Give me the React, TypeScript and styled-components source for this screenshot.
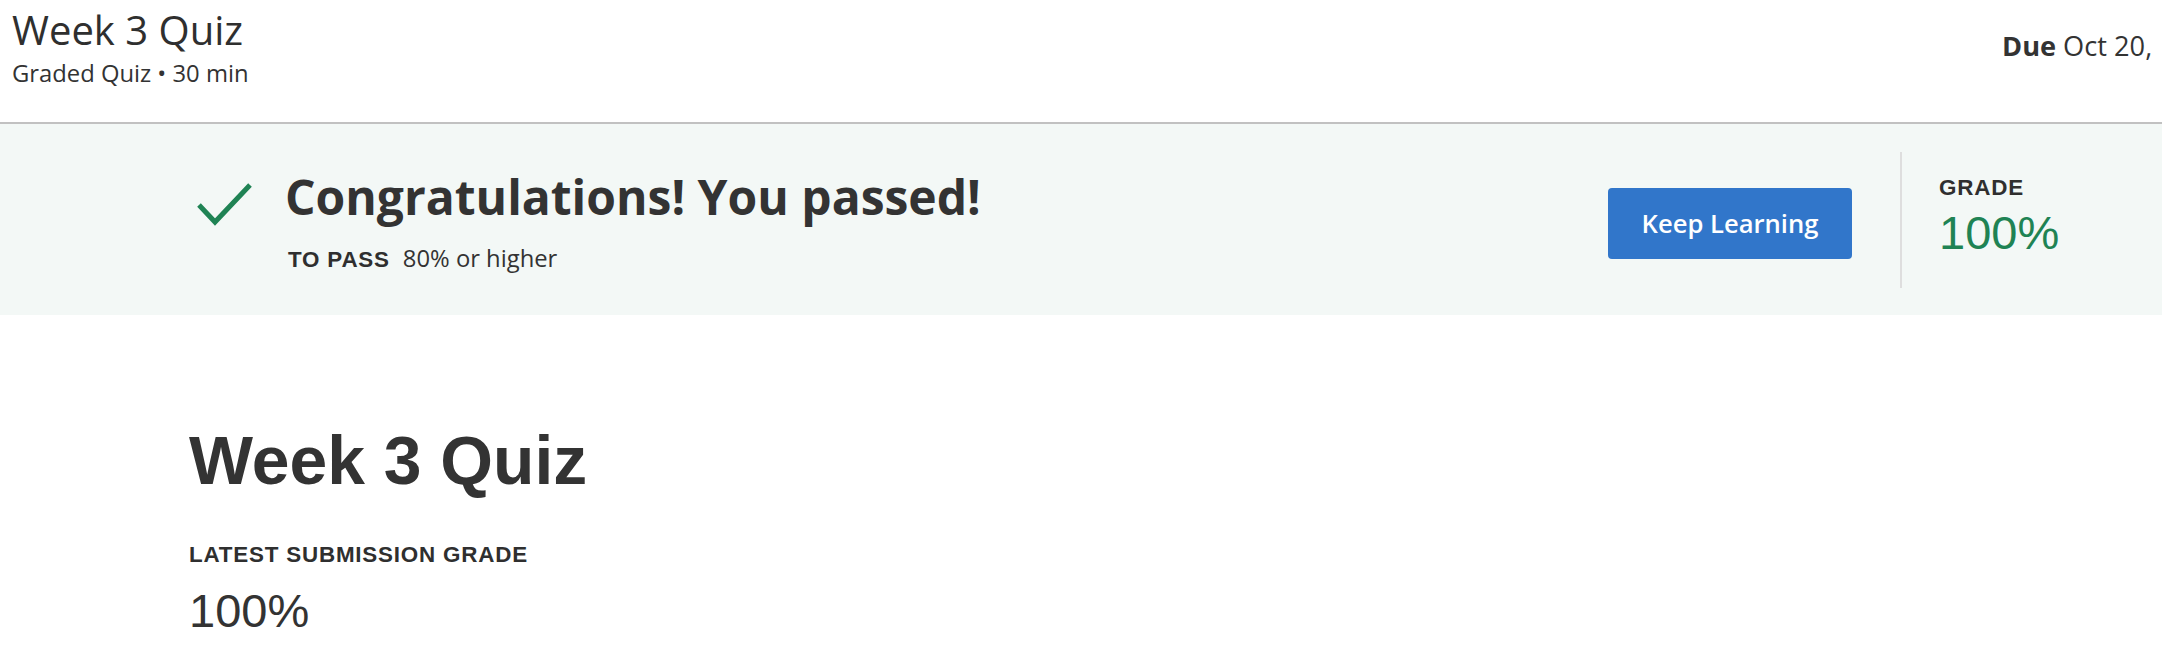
import React from "react";
import styled, { createGlobalStyle } from "styled-components";

const GlobalStyle = createGlobalStyle`
  html, body {
    margin: 0;
    padding: 0;
    background: #ffffff;
    overflow: hidden;
  }
  body {
    font-family: "Open Sans", "Liberation Sans", Arial, sans-serif;
    color: #333333;
  }
  * { box-sizing: border-box; }
`;

const Page = styled.div`
  width: 100%;
  display: flex;
  flex-direction: column;
`;

const Header = styled.header`
  height: 124px;
  display: flex;
  justify-content: space-between;
  align-items: flex-start;
  padding: 4px 0 0 12px;
  border-bottom: 2px solid #c1c1c1;
`;

const TitleBlock = styled.div`
  display: flex;
  flex-direction: column;
`;

const HeaderTitle = styled.h1`
  margin: 0;
  font-family: "Open Sans", sans-serif;
  font-weight: 400;
  font-size: 40px;
  line-height: 51px;
  color: #2f2f2f;
`;

const HeaderSub = styled.div`
  margin-top: 5px;
  font-family: "Open Sans", sans-serif;
  font-size: 23.8px;
  line-height: 27px;
  color: #333333;
`;

const Due = styled.div`
  flex: 0 0 160px;
  margin-top: 25px;
  white-space: nowrap;
  font-family: "Open Sans", sans-serif;
  font-size: 27.2px;
  line-height: 34px;
  color: #333333;

  strong {
    font-weight: 700;
  }
`;

const Band = styled.section`
  height: 191px;
  background: #f3f8f6;
  display: flex;
  align-items: flex-start;
  padding: 28px 0 0 196px;
`;

const CheckIcon = styled.svg`
  flex: 0 0 auto;
  width: 56px;
  height: 44px;
  margin-top: 30px;
  margin-right: 33px;
`;

const Message = styled.div`
  display: flex;
  flex-direction: column;
  margin-top: 18px;
`;

const Congrats = styled.h2`
  margin: 0;
  font-family: "Open Sans", sans-serif;
  font-weight: 700;
  font-size: 48px;
  line-height: 54px;
  color: #333333;
`;

const PassRow = styled.div`
  display: flex;
  align-items: baseline;
  gap: 13px;
  margin-top: 21px;
  padding-left: 3px;
`;

const Label = styled.span`
  font-family: "Liberation Sans", Arial, sans-serif;
  font-weight: 700;
  font-size: 22.4px;
  line-height: 27px;
  letter-spacing: 0.8px;
  text-transform: uppercase;
  color: #2f2f2f;
`;

const PassValue = styled.span`
  font-family: "Open Sans", sans-serif;
  font-size: 23.8px;
  line-height: 27px;
  color: #333333;
`;

const KeepButton = styled.button`
  margin-left: auto;
  margin-top: 36px;
  width: 244px;
  height: 71px;
  border: none;
  border-radius: 4px;
  background: #3176ca;
  color: #ffffff;
  font-family: "Open Sans", sans-serif;
  font-weight: 600;
  font-size: 25.6px;
  cursor: pointer;
`;

const Divider = styled.div`
  width: 2px;
  height: 136px;
  background: #dedede;
  margin-left: 48px;
  margin-right: 37px;
`;

const GradeBlock = styled.div`
  flex: 0 0 223px;
  display: flex;
  flex-direction: column;
  margin-top: 22px;
`;

const BigPercent = styled.div<{ $green?: boolean }>`
  font-family: "Liberation Sans", Arial, sans-serif;
  font-weight: 400;
  font-size: 47px;
  line-height: 53px;
  color: ${(p) => (p.$green ? "#1f8354" : "#333333")};
`;

const GradePercent = styled(BigPercent)`
  margin-top: 5px;
`;

const Content = styled.main`
  display: flex;
  flex-direction: column;
  padding: 106px 0 0 189px;
`;

const QuizHeading = styled.h1`
  margin: 0;
  font-family: "Liberation Sans", Arial, sans-serif;
  font-weight: 700;
  font-size: 67.8px;
  line-height: 80px;
  color: #333333;
`;

const LatestLabel = styled(Label)`
  display: block;
  margin-top: 40px;
`;

const LatestPercent = styled(BigPercent)`
  margin-top: 16px;
`;

export default function App() {
  return (
    <Page>
      <GlobalStyle />
      <Header>
        <TitleBlock>
          <HeaderTitle>Week 3 Quiz</HeaderTitle>
          <HeaderSub>Graded Quiz • 30 min</HeaderSub>
        </TitleBlock>
        <Due>
          <strong>Due</strong> Oct 20,
        </Due>
      </Header>

      <Band>
        <CheckIcon viewBox="0 0 56 44" aria-hidden="true">
          <path
            d="M3 23 L19 40 L54 3"
            fill="none"
            stroke="#1f8354"
            strokeWidth="5"
          />
        </CheckIcon>
        <Message>
          <Congrats>Congratulations! You passed!</Congrats>
          <PassRow>
            <Label>To pass</Label>
            <PassValue>80% or higher</PassValue>
          </PassRow>
        </Message>
        <KeepButton>Keep Learning</KeepButton>
        <Divider />
        <GradeBlock>
          <Label>Grade</Label>
          <GradePercent $green>100%</GradePercent>
        </GradeBlock>
      </Band>

      <Content>
        <QuizHeading>Week 3 Quiz</QuizHeading>
        <LatestLabel>Latest Submission Grade</LatestLabel>
        <LatestPercent>100%</LatestPercent>
      </Content>
    </Page>
  );
}
